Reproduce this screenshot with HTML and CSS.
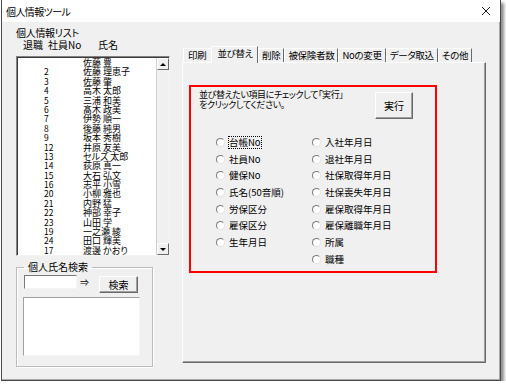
FILE: index.html
```html
<!DOCTYPE html>
<html lang="ja">
<head>
  <meta charset="UTF-8" />
  <meta name="viewport" content="width=device-width, initial-scale=1.0" />
  <title>個人情報ツール</title>
  <link rel="stylesheet" href="styles.css">
</head>
<body>
  <div class="window">
    <!-- Title bar -->
    <div class="titlebar">
      <span class="title">個人情報ツール</span>
      <svg class="close" width="10" height="10" viewBox="0 0 10 10">
        <path d="M1 1L9 9M9 1L1 9" stroke="#1a1a1a" stroke-width="1" fill="none" />
      </svg>
    </div>

    <div class="form-body">
      <!-- Left: list + search -->
      <div class="left-panel">
        <div class="caption">個人情報リスト</div>
        <div class="list-head">
          <span class="h-retire">退職</span>
          <span class="h-no">社員No</span>
          <span class="h-name">氏名</span>
        </div>

        <div class="listbox">
          <div class="list-rows">
            <div class="row"><span class="no"></span><span class="name">佐藤 豊</span></div>
            <div class="row"><span class="no">2</span><span class="name">佐藤 理恵子</span></div>
            <div class="row"><span class="no">3</span><span class="name">佐藤 肇</span></div>
            <div class="row"><span class="no">4</span><span class="name">高木 太郎</span></div>
            <div class="row"><span class="no">5</span><span class="name">三浦 和美</span></div>
            <div class="row"><span class="no">6</span><span class="name">髙木 政美</span></div>
            <div class="row"><span class="no">7</span><span class="name">伊勢 順一</span></div>
            <div class="row"><span class="no">8</span><span class="name">後藤 純男</span></div>
            <div class="row"><span class="no">9</span><span class="name">坂本 秀樹</span></div>
            <div class="row"><span class="no">12</span><span class="name">井原 友美</span></div>
            <div class="row"><span class="no">13</span><span class="name">セルズ 太郎</span></div>
            <div class="row"><span class="no">14</span><span class="name">荻原 真一</span></div>
            <div class="row"><span class="no">15</span><span class="name">大石 弘文</span></div>
            <div class="row"><span class="no">16</span><span class="name">志平 小雪</span></div>
            <div class="row"><span class="no">20</span><span class="name">小柳 雅也</span></div>
            <div class="row"><span class="no">21</span><span class="name">内野 猛</span></div>
            <div class="row"><span class="no">22</span><span class="name">神部 幸子</span></div>
            <div class="row"><span class="no">23</span><span class="name">山田 学</span></div>
            <div class="row"><span class="no">19</span><span class="name">一之瀬 綾</span></div>
            <div class="row"><span class="no">24</span><span class="name">田口 輝美</span></div>
            <div class="row"><span class="no">17</span><span class="name">渡邊 かおり</span></div>
          </div>
          <div class="scrollbar">
            <div class="sb-btn"><span class="tri-up"></span></div>
            <div class="sb-track"></div>
            <div class="sb-btn"><span class="tri-down"></span></div>
          </div>
        </div>

        <fieldset class="search-group">
          <legend>個人氏名検索</legend>
          <div class="search-row">
            <input type="text" class="search-input" />
            <span class="arrow">⇒</span>
            <button class="btn search-btn">検索</button>
          </div>
          <div class="result-box"></div>
        </fieldset>
      </div>

      <!-- Right: tabs -->
      <div class="right-panel">
        <div class="tabs">
          <div class="tab">印刷</div>
          <div class="tab active">並び替え</div>
          <div class="tab">削除</div>
          <div class="tab">被保険者数</div>
          <div class="tab">Noの変更</div>
          <div class="tab">データ取込</div>
          <div class="tab">その他</div>
        </div>
        <div class="tab-page">
          <div class="sort-box">
            <div class="sort-head">
              <p class="sort-help">並び替えたい項目にチェックして「実行」<br>をクリックしてください。</p>
              <button class="btn run-btn">実行</button>
            </div>
            <div class="sort-options">
              <div class="opt-col">
                <label class="opt"><span class="radio"></span><span class="focus">台帳No</span></label>
                <label class="opt"><span class="radio"></span>社員No</label>
                <label class="opt"><span class="radio"></span>健保No</label>
                <label class="opt"><span class="radio"></span>氏名(50音順)</label>
                <label class="opt"><span class="radio"></span>労保区分</label>
                <label class="opt"><span class="radio"></span>雇保区分</label>
                <label class="opt"><span class="radio"></span>生年月日</label>
              </div>
              <div class="opt-col">
                <label class="opt"><span class="radio"></span>入社年月日</label>
                <label class="opt"><span class="radio"></span>退社年月日</label>
                <label class="opt"><span class="radio"></span>社保取得年月日</label>
                <label class="opt"><span class="radio"></span>社保喪失年月日</label>
                <label class="opt"><span class="radio"></span>雇保取得年月日</label>
                <label class="opt"><span class="radio"></span>雇保離職年月日</label>
                <label class="opt"><span class="radio"></span>所属</label>
                <label class="opt"><span class="radio"></span>職種</label>
              </div>
            </div>
          </div>
        </div>
      </div>
    </div>
  </div>
</body>
</html>
```

FILE: styles.css
```css
body {
  margin: 0;
  background: #fff;
  font-family: "Noto Sans CJK JP", "Noto Sans", sans-serif;
  font-feature-settings: "palt";
  font-size: 10px;
  color: #000;
}

.window {
  margin-left: 1px;
  width: 500px;
  height: 381px;
  box-sizing: border-box;
  border: 1px solid #4a4a4a;
  border-top: none;
  background: #f0f0f0;
  box-shadow: 3px 3px 3px rgba(0, 0, 0, 0.45), inset -1px -1px 0 #a8a8a8;
  display: flex;
  flex-direction: column;
}

.titlebar {
  height: 22px;
  flex: none;
  background: #fff;
  display: flex;
  align-items: center;
  justify-content: space-between;
  padding: 0 9px 0 4px;
}

.title {
  font-size: 10px;
  letter-spacing: -0.6px;
}

.form-body {
  flex: 1;
  display: flex;
  gap: 12px;
  padding: 5px 0 0 14px;
}

/* left panel */
.left-panel {
  width: 154px;
  display: flex;
  flex-direction: column;
}

.caption {
  line-height: 12px;
  height: 12px;
  letter-spacing: -0.3px;
}

.list-head {
  display: flex;
  line-height: 12px;
  height: 12px;
  padding-left: 7px;
}

.h-retire {
  width: 25px;
}

.h-no {
  width: 50px;
}

.listbox {
  margin-top: 5px;
  height: 200px;
  box-sizing: border-box;
  background: #fff;
  border: 1px solid;
  border-color: #828282 #f4f4f4 #f4f4f4 #828282;
  box-shadow: inset 1px 1px 0 #3c3c3c;
  display: flex;
}

.list-rows {
  flex: 1;
  padding-top: 1px;
}

.row {
  display: flex;
  height: 9.4px;
  line-height: 9.4px;
  font-size: 9px;
  white-space: nowrap;
}

.no {
  width: 39px;
  margin-left: 27px;
  font-size: 8.5px;
}

.scrollbar {
  width: 12px;
  margin: 1px 0 0;
  display: flex;
  flex-direction: column;
  background: #f0f0f0;
  border-left: 1px solid #d0d0d0;
}

.sb-btn {
  height: 12px;
  box-sizing: border-box;
  border: 1px solid;
  border-color: #fff #6a6a6a #6a6a6a #fff;
  display: flex;
  align-items: center;
  justify-content: center;
}

.sb-track {
  flex: 1;
}

.tri-up {
  border-left: 3px solid transparent;
  border-right: 3px solid transparent;
  border-bottom: 3px solid #000;
}

.tri-down {
  border-left: 3px solid transparent;
  border-right: 3px solid transparent;
  border-top: 3px solid #000;
}

/* search group */
.search-group {
  margin: 5px 0 0;
  width: 137px;
  box-sizing: border-box;
  padding: 2px 6px 10px 7px;
  border: 1px solid #bcbcbc;
  box-shadow: 1px 1px 0 #fff, inset 1px 1px 0 #fff;
}

.search-group legend {
  padding: 0 4px;
  line-height: 12px;
}

.search-row {
  display: flex;
  align-items: flex-start;
}

.search-input {
  width: 53px;
  height: 14px;
  box-sizing: border-box;
  margin: 0;
  padding: 0;
  background: #fff;
  border: 1px solid;
  border-color: #7a7a7a #f4f4f4 #f4f4f4 #7a7a7a;
}

.arrow {
  width: 14px;
  margin-left: 3px;
  line-height: 16px;
  font-size: 9px;
}

.btn {
  font-family: inherit;
  font-feature-settings: "palt";
  font-size: 10px;
  color: #000;
  background: #f0f0f0;
  padding: 0;
  border: 1px solid;
  border-color: #fff #6a6a6a #6a6a6a #fff;
  box-shadow: inset -1px -1px 0 #a0a0a0;
}

.search-btn {
  margin: 1px 0 0 5px;
  width: 39px;
  height: 17px;
}

.result-box {
  margin: 4px 0 0 -1px;
  width: 117px;
  height: 59px;
  box-sizing: border-box;
  background: #fff;
  border: 1px solid;
  border-color: #a0a0a0 #f4f4f4 #f4f4f4 #a0a0a0;
}

/* right panel */
.right-panel {
  width: 304px;
  margin-top: 21px;
}

.tabs {
  display: flex;
  align-items: flex-end;
  height: 14px;
  padding-left: 1px;
}

.tab {
  flex: none;
  white-space: nowrap;
  height: 14px;
  box-sizing: border-box;
  line-height: 12px;
  font-size: 9.5px;
  letter-spacing: -0.3px;
  padding: 0 3px 0 3px;
  border-top: 1px solid #fff;
  border-left: 1px solid #fff;
  border-right: 1px solid #6a6a6a;
}

.tab:first-child {
  padding: 0 5px 0 4px;
}

.tab.active {
  position: relative;
  height: 17px;
  margin: 0 0 -1px -1px;
  padding: 0 4px 2px 5px;
  background: #f0f0f0;
  z-index: 1;
}

.tab-page {
  height: 301px;
  box-sizing: border-box;
  border: 1px solid;
  border-color: #fff #6a6a6a #6a6a6a #fff;
  box-shadow: inset -1px -1px 0 #a0a0a0;
  padding: 22px 0 0 6px;
}

.sort-box {
  width: 248px;
  height: 188px;
  box-sizing: border-box;
  border: 2px solid #f00;
  padding: 3px 0 0 8px;
}

.sort-head {
  display: flex;
  justify-content: space-between;
  align-items: flex-start;
  padding-right: 22px;
}

.sort-help {
  margin: 0;
  line-height: 10px;
  font-size: 9px;
  letter-spacing: -0.4px;
}

.run-btn {
  margin-top: 2px;
  width: 38px;
  height: 27px;
}

.sort-options {
  display: flex;
  margin: 15px 0 0 17px;
}

.opt-col {
  width: 96px;
  display: flex;
  flex-direction: column;
}

.opt {
  height: 16.7px;
  display: flex;
  align-items: center;
  gap: 4px;
  white-space: nowrap;
  line-height: 11px;
  font-size: 9.5px;
}

.radio {
  width: 9px;
  height: 9px;
  box-sizing: border-box;
  border-radius: 50%;
  background: #fff;
  border: 1px solid;
  border-color: #7a7a7a #e4e4e4 #e4e4e4 #7a7a7a;
}

.focus {
  outline: 1px dotted #000;
  outline-offset: 0;
}
```
